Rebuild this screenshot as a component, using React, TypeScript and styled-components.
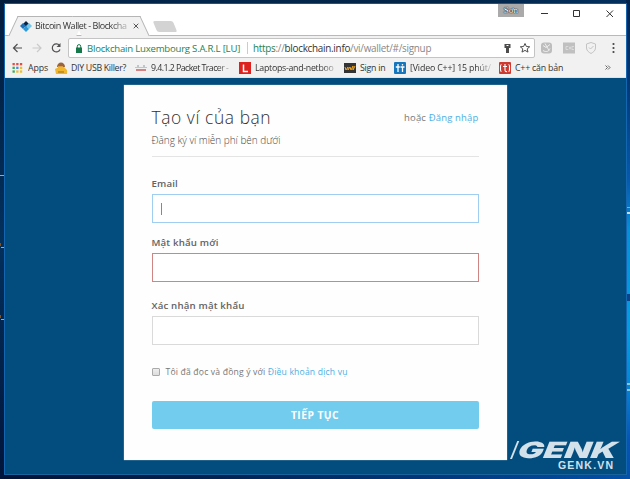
import React from 'react';
import styled, { createGlobalStyle } from 'styled-components';

const GlobalStyle = createGlobalStyle`
  * { box-sizing: border-box; }
  body { margin: 0; overflow: hidden; }
`;

const Desktop = styled.div`
  position: relative;
  width: 630px;
  height: 479px;
  padding: 3px 3px 4px 4px;
  background:
    linear-gradient(#c9dce2, #c9dce2) 627px 212px / 3px 2px no-repeat,
    linear-gradient(#6cb8d8, #6cb8d8) 627px 207px / 3px 1px no-repeat,
    linear-gradient(#0b4288, #0b4288) 627px 294px / 3px 7px no-repeat,
    linear-gradient(#84c8dc, #84c8dc) 627px 383px / 3px 2px no-repeat,
    linear-gradient(#84c8dc, #84c8dc) 627px 389px / 3px 2px no-repeat,
    linear-gradient(#03234a 0, #043a78 90px, #0759ac 180px, #078fd8 230px, #069ce2 330px, #0785d4 385px, #0754b4 440px, #0450a8) 626px 0 / 4px 479px no-repeat,
    linear-gradient(#a8a8a0, #a8a8a0) 0 175px / 4px 1px no-repeat,
    linear-gradient(#a8a8a0, #a8a8a0) 1px 247px / 3px 1px no-repeat,
    linear-gradient(#a8a8a0, #a8a8a0) 1px 319px / 3px 1px no-repeat,
    linear-gradient(#84501c, #84501c) 0 243px / 1px 3px no-repeat,
    linear-gradient(#84501c, #84501c) 0 315px / 1px 3px no-repeat,
    linear-gradient(#021c3c, #03305c 50%, #02153a) 0 0 / 4px 479px no-repeat,
    linear-gradient(90deg, #021c3c, #03264c 30%, #022548 70%, #03305f) 0 0 / 630px 4px no-repeat,
    linear-gradient(90deg, #021337, #02204c 30%, #03387c 70%, #0450a8);
`;

const BrowserWindow = styled.div`
  display: flex;
  flex-direction: column;
  width: 623px;
  height: 472px;
  border: 1px solid #1267b0;
  border-top-color: #1b5387;
  border-bottom-color: #1a629c;
  background: #034d7e;
  font-family: 'Open Sans', 'Noto Sans', sans-serif;
`;

const TabStrip = styled.div`
  display: flex;
  align-items: flex-end;
  height: 32px;
  padding-left: 8px;
  background: #fff;
  border-bottom: 1px solid #b9b9b9;
`;

const Tab = styled.div`
  position: relative;
  display: flex;
  align-items: center;
  width: 132px;
  height: 20px;
  margin-bottom: -1px;
  padding-left: 7px;
  &::before, &::after {
    content: '';
    position: absolute;
    top: 0;
    bottom: 0;
    width: 67px;
    background: #f1f1f1;
    border-top: 1px solid #b5b5b5;
  }
  &::before { left: 0; border-left: 1px solid #b5b5b5; transform: skewX(-25deg); }
  &::after { right: 0; border-right: 1px solid #b5b5b5; transform: skewX(25deg); }
  & > * { position: relative; z-index: 1; }
`;

const TabTitle = styled.span`
  width: 93px;
  margin: 0 5px 0 3px;
  overflow: hidden;
  white-space: nowrap;
  font-size: 9px;
  line-height: 14px;
  letter-spacing: -0.43px;
  color: #333;
  mask-image: linear-gradient(90deg, #000 80%, rgba(0, 0, 0, 0.25));
`;

const NewTab = styled.span`
  width: 20px;
  height: 11px;
  margin: 0 0 3px 10px;
  border-radius: 2px;
  background: #d3d3d3;
  transform: skewX(22deg);
`;

const WindowControls = styled.div`
  display: flex;
  align-self: flex-start;
  align-items: flex-start;
  margin-left: auto;
  height: 20px;
`;

const Profile = styled.span`
  width: 26px;
  height: 13px;
  margin-right: 13px;
  background: #aaa;
  color: #fff;
  text-align: center;
  font: 9px/13px 'Liberation Serif', serif;
  text-shadow: 0 0 1px #222, 0 0 1px #222, 0 0 1px #222;
`;

const ControlIcons = styled.svg`
  width: 89px;
  height: 20px;
`;

const Toolbar = styled.div`
  display: flex;
  align-items: center;
  height: 24px;
  padding-left: 6px;
  background: #f1f1f1;
`;

const NavIcons = styled.svg`
  flex: none;
  width: 57px;
  height: 20px;
`;

const AddressBar = styled.div`
  display: flex;
  align-items: center;
  flex: none;
  width: 467px;
  height: 20px;
  padding-left: 7px;
  border: 1px solid #c4c4c4;
  border-radius: 2px;
  background: #fff;
  white-space: nowrap;
`;

const Issuer = styled.span`
  width: 160px;
  margin-left: 5px;
  font-size: 9.6px;
  letter-spacing: -0.22px;
  color: #238455;
`;

const Url = styled.span`
  display: flex;
  align-items: center;
  height: 12px;
  padding-left: 5px;
  border-left: 1px solid #ccc;
  font-size: 9.9px;
  letter-spacing: -0.27px;
  color: #888;
`;

const Secure = styled.span`color: #238455;`;
const Host = styled.span`color: #333;`;

const BarIcons = styled.svg`
  width: 32px;
  height: 16px;
  margin-left: auto;
`;

const Extensions = styled.svg`
  width: 84px;
  height: 20px;
  margin-left: 3px;
`;

const Bookmarks = styled.div`
  display: flex;
  height: 18px;
  align-items: center;
  padding: 0 0 2px 7px;
  background: #f1f1f1;
  border-bottom: 1px solid #dde3e8;
`;

const Bookmark = styled.div<{ $w: number }>`
  display: flex;
  flex: none;
  align-items: center;
  width: ${p => p.$w}px;
  height: 15px;
`;

const BookmarkText = styled.span<{ $w: number; $fade?: boolean; $spacing?: number }>`
  width: ${p => p.$w}px;
  margin-left: 4px;
  overflow: hidden;
  white-space: nowrap;
  font-size: 8.8px;
  line-height: 14px;
  letter-spacing: ${p => p.$spacing ?? -0.1}px;
  color: #333;
  mask-image: ${p => (p.$fade ? 'linear-gradient(90deg, #000 82%, rgba(0, 0, 0, 0.2))' : 'none')};
`;

const Favicon = styled.svg`
  flex: none;
  width: 12px;
  height: 12px;
`;

const Page = styled.main`
  display: flex;
  flex: 1;
  justify-content: center;
  align-items: flex-start;
  padding: 7px 1px 0 0;
`;

const Card = styled.form`
  width: 383px;
  height: 375px;
  padding: 20px 28px 0;
  background: #fefefe;
  box-shadow: 0 0 1px #b9cddd;
  color: #555;
`;

const CardHeader = styled.header`
  display: grid;
  grid-template-columns: 1fr auto;
  grid-template-rows: 25px 20px;
  height: 52px;
  border-bottom: 1px solid #e4e4e4;
`;

const Title = styled.h1`
  margin: 0;
  font-weight: 300;
  font-size: 17.4px;
  line-height: 24px;
  letter-spacing: 0.58px;
  color: #303030;
`;

const Alternative = styled.span`
  font-size: 9.5px;
  line-height: 25px;
  letter-spacing: 0.16px;
  color: #777;
`;

const Link = styled.a`color: #4ab0e4;`;

const Subtitle = styled.p`
  margin: 0;
  font-weight: 300;
  font-size: 10px;
  line-height: 21px;
  letter-spacing: -0.02px;
  color: #484848;
`;

const Field = styled.label<{ $gap: number }>`
  display: block;
  margin-top: ${p => p.$gap}px;
  font-size: 9.7px;
  font-weight: 600;
  line-height: 16px;
  letter-spacing: 0.16px;
  color: #626262;
`;

const Input = styled.span<{ $color: string }>`
  display: flex;
  align-items: center;
  height: 29px;
  margin-top: 2px;
  padding-left: 8px;
  border: 1px solid ${p => p.$color};
  background: #fff;
`;

const Caret = styled.i`
  width: 1px;
  height: 12px;
  background: #888;
`;

const Terms = styled.div`
  display: flex;
  align-items: center;
  height: 16px;
  margin-top: 19px;
  font-size: 8.6px;
  letter-spacing: 0.18px;
  color: #777;
`;

const Checkbox = styled.span`
  width: 8px;
  height: 8px;
  margin-right: 6px;
  border: 1px solid #aaa;
  border-radius: 1px;
  background: linear-gradient(#eee, #ddd);
`;

const Submit = styled.button`
  display: block;
  width: 327px;
  height: 28px;
  margin-top: 21px;
  padding: 0;
  border: 0;
  border-radius: 2px;
  background: #72ccee;
  color: #fff;
  font: 700 10.3px/28px 'Open Sans', sans-serif;
  letter-spacing: 0.45px;
`;

const Watermark = styled.div`
  position: absolute;
  left: 510px;
  top: 440px;
  width: 114px;
  color: #d3e1eb;
`;

const Brand = styled.div`
  display: flex;
  height: 19px;
  width: 110px;
  font: 900 22.5px/19px Inter, sans-serif;
  white-space: nowrap;
  transform-origin: 0 100%;
  transform: skewX(-22deg);
`;

const Slash = styled.span`
  width: 2px;
  height: 18px;
  margin: 1px 3px 0 0;
  background: #d3e1eb;
`;

const BrandName = styled.span`
  transform-origin: 0 50%;
  transform: scaleX(1.52);
`;

const Domain = styled.div`
  margin: 1px 0 0 48px;
  font: 700 10.5px/11px 'Liberation Sans', sans-serif;
  letter-spacing: 1.2px;
`;

const dotColors = ['#e34d42', '#e34d42', '#e34d42', '#3aa75a', '#4b87e8', '#efbd2b', '#3aa75a', '#efbd2b', '#efbd2b'];

export default function App() {
  return (
    <Desktop>
      <GlobalStyle />
      <BrowserWindow>
        <TabStrip>
          <Tab>
            <Favicon viewBox="0 0 12 12">
              <path d="M6 1l3 3-3 3-3-3z" fill="#0a2544" />
              <path d="M3 3l3 3-3 3-3-3z" fill="#1e70b7" />
              <path d="M9 3l3 3-3 3-3-3z" fill="#71c6ea" />
              <path d="M6 6l3 3-3 3-3-3z" fill="#2c9bd9" />
            </Favicon>
            <TabTitle>Bitcoin Wallet - Blockcha</TabTitle>
            <svg width="6" height="6" viewBox="0 0 6 6"><path d="M.7.7l4.6 4.6M5.3.7L.7 5.3" stroke="#555" /></svg>
          </Tab>
          <NewTab />
          <WindowControls>
            <Profile>Sơn</Profile>
            <ControlIcons viewBox="0 0 89 20" fill="none" stroke="#333">
              <path d="M4 9.500h7M36.500 6.500h6v6h-6zM69.500 6.500l6.500 6.500M76 6.500L69.500 13" />
            </ControlIcons>
          </WindowControls>
        </TabStrip>
        <Toolbar>
          <NavIcons viewBox="0 0 57 20" fill="none" strokeWidth="1.2">
            <path d="M11 10H2.500M6.500 6l-4 4 4 4" stroke="#4f4f4f" />
            <path d="M21.500 10H30M26 6l4 4-4 4" stroke="#cacaca" />
            <path d="M48.500 7.500A4 4 0 1 0 49 11.500" stroke="#4f4f4f" />
            <path d="M49.500 5v4h-4z" fill="#4f4f4f" />
          </NavIcons>
          <AddressBar>
            <svg width="6" height="9" viewBox="0 0 6 9"><path d="M0 3.500h6V9H0z" fill="#16794a" /><path d="M1.300 4V2.300a1.700 1.700 0 0 1 3.400 0V4" fill="none" stroke="#16794a" /></svg>
            <Issuer>Blockchain Luxembourg S.A.R.L [LU]</Issuer>
            <Url><Secure>https</Secure>://<Host>blockchain.info</Host>/vi/wallet/#/signup</Url>
            <BarIcons viewBox="0 0 32 16">
              <path d="M2.500 4h6v4H7v5H4V8H2.500z" fill="#4c4c4c" /><path d="M4.500 5.500h2" stroke="#fff" />
              <path d="M23 3.500l1.400 3 3.300.3-2.500 2.100.8 3.200-3-1.700-3 1.700.8-3.200-2.500-2.100 3.300-.3z" fill="none" stroke="#4c4c4c" />
            </BarIcons>
          </AddressBar>
          <Extensions viewBox="0 0 84 20">
            <rect x="3" y="4.500" width="11" height="11" rx="3" fill="#bdbdbd" />
            <path d="M5 7.500l3 2 4-3M5 12.500c3 2 6 1 7-2M7 5.500l4 7" stroke="#eee" fill="none" />
            <rect x="25" y="4.500" width="12" height="11" fill="#c0c0c0" />
            <path d="M28 8.500v3m0-3h2m-2 3h2m1-3l2 3m0-3l-2 3m3-3h2m-2 0v3h2" stroke="#e5e5e5" strokeWidth=".7" fill="none" />
            <path d="M53 4.500l4.500 1.500v4c0 3-3 4.500-4.500 5.500-1.500-1-4.500-2.500-4.500-5.500v-4z" fill="none" stroke="#c3c3c3" />
            <path d="M51 9.500l1.500 1.500 3-3" fill="none" stroke="#c3c3c3" />
            <g fill="#444"><circle cx="75.500" cy="6" r="1.100" /><circle cx="75.500" cy="10" r="1.100" /><circle cx="75.500" cy="14" r="1.100" /></g>
          </Extensions>
        </Toolbar>
        <Bookmarks>
          <Bookmark $w={43}>
            <Favicon viewBox="0 0 12 12">
              {dotColors.map((c, i) => <rect key={i} x={0.5 + (i % 3) * 3.7} y={1 + Math.floor(i / 3) * 3.7} width="2.3" height="2.3" fill={c} />)}
            </Favicon>
            <BookmarkText $w={24}>Apps</BookmarkText>
          </Bookmark>
          <Bookmark $w={80}>
            <Favicon viewBox="0 0 12 12"><path d="M2 5c0-6 8-6 8 0z" fill="#9a653e" /><path d="M3 4h5v3H3z" fill="#d99d49" /><path d="M0 7l4-2h5l3 3v4H1z" fill="#efb72f" /><path d="M3 10h6" stroke="#9b6a1b" /></Favicon>
            <BookmarkText $w={62} $spacing={-0.31}>DIY USB Killer?</BookmarkText>
          </Bookmark>
          <Bookmark $w={104}>
            <Favicon viewBox="0 0 12 12"><path d="M1 6V5m2 1V3m2 3V5m2 1V5m2 1V3m2 3V5" stroke="#8a9da4" /><path d="M1 8h10" stroke="#d48282" strokeWidth="2" /></Favicon>
            <BookmarkText $w={80} $fade $spacing={-0.55}>9.4.1.2 Packet Tracer -</BookmarkText>
          </Bookmark>
          <Bookmark $w={105}>
            <Favicon viewBox="0 0 12 12"><path d="M0 0h12v12H0z" fill="#dd211e" /><path d="M4.500 2.500v7H9" fill="none" stroke="#fff" strokeWidth="1.500" /></Favicon>
            <BookmarkText $w={81} $fade $spacing={-0.28}>Laptops-and-netboo</BookmarkText>
          </Bookmark>
          <Bookmark $w={50}>
            <Favicon viewBox="0 0 12 12"><path d="M0 1h12v10H0z" fill="#343434" /><path d="M1 5l1 3 2-3v3l2-3 1 3 2-4v4l2-4" fill="none" stroke="#f3a51b" /></Favicon>
            <BookmarkText $w={30} $spacing={-0.25}>Sign in</BookmarkText>
          </Bookmark>
          <Bookmark $w={105}>
            <Favicon viewBox="0 0 12 12"><rect width="12" height="12" rx="1" fill="#1676bd" /><path d="M4 2v8M1.800 5h4M8.500 5v5M6.500 5h4M8.500 2v1.500" stroke="#fff" strokeWidth="1.300" /></Favicon>
            <BookmarkText $w={81} $fade $spacing={-0.15}>[Video C++] 15 phút/</BookmarkText>
          </Bookmark>
          <Bookmark $w={106}>
            <Favicon viewBox="0 0 12 12"><rect width="12" height="12" rx="1" fill="#ce3930" /><path d="M6 2v6q0 2 2 1.500M4 4.500h4M2.500 2.500q-1 0-1 2v3q0 2 1 2M9.500 2.500q1 0 1 2v3q0 2-1 2" stroke="#fff" fill="none" strokeWidth="1.100" /></Favicon>
            <BookmarkText $w={60} $spacing={-0.2}>C++ căn bản</BookmarkText>
          </Bookmark>
          <svg width="6" height="5" viewBox="0 0 6 5"><path d="M.5.5l2 2-2 2M3 .5l2 2-2 2" fill="none" stroke="#444" strokeWidth=".8" /></svg>
        </Bookmarks>
        <Page>
          <Card>
            <CardHeader>
              <Title>Tạo ví của bạn</Title>
              <Alternative>hoặc <Link>Đăng nhập</Link></Alternative>
              <Subtitle>Đăng ký ví miễn phí bên dưới</Subtitle>
            </CardHeader>
            <Field $gap={19}>Email<Input $color="#9fcef0"><Caret /></Input></Field>
            <Field $gap={12}>Mật khẩu mới<Input $color="#cf8584">{null}</Input></Field>
            <Field $gap={16}>Xác nhận mật khẩu<Input $color="#dadada">{null}</Input></Field>
            <Terms><Checkbox /><span>Tôi đã đọc và đồng ý với <Link>Điều khoản dịch vụ</Link></span></Terms>
            <Submit type="button">TIẾP TỤC</Submit>
          </Card>
        </Page>
      </BrowserWindow>
      <Watermark>
        <Brand><Slash /><BrandName>GENK</BrandName></Brand>
        <Domain>GENK.VN</Domain>
      </Watermark>
    </Desktop>
  );
}
